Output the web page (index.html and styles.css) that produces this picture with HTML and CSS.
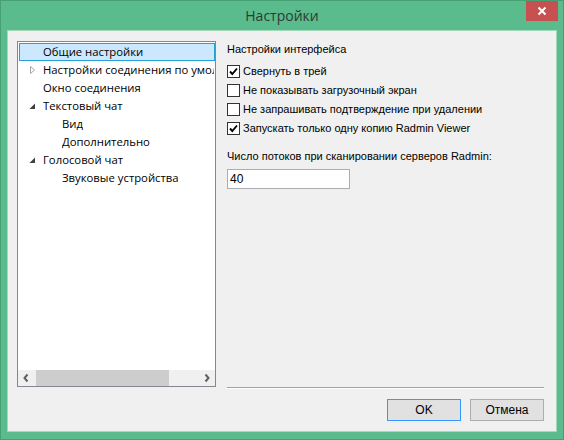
FILE: index.html
```html
<!DOCTYPE html>
<html lang="ru">
<head>
<meta charset="utf-8">
<title>Настройки</title>
<link rel="stylesheet" href="styles.css">
</head>
<body>
<div class="window">
  <div class="titlebar">
    <div class="tb-spacer"></div>
    <div class="title">Настройки</div>
    <div class="tb-right">
      <div class="close-btn">
        <svg width="10" height="10" viewBox="0 0 10 10"><path d="M1.5 1.5 L8.5 8.5 M8.5 1.5 L1.5 8.5" stroke="#fff" stroke-width="2" fill="none"/></svg>
      </div>
    </div>
  </div>
  <div class="client">
    <div class="main">
      <div class="tree">
        <div class="tree-items">
          <div class="node lvl0 selected"><span class="exp"></span><span class="label">Общие настройки</span></div>
          <div class="node lvl0"><span class="exp"><svg width="12" height="16" viewBox="0 0 12 16"><path d="M3.5 4.5 L7.5 8 L3.5 11.5 Z" fill="none" stroke="#a6a6a6" stroke-width="1"/></svg></span><span class="label">Настройки соединения по умолчанию</span></div>
          <div class="node lvl0"><span class="exp"></span><span class="label">Окно соединения</span></div>
          <div class="node lvl0"><span class="exp"><svg width="12" height="16" viewBox="0 0 12 16"><path d="M8 5.5 L8 11 L2.5 11 Z" fill="#404040"/></svg></span><span class="label">Текстовый чат</span></div>
          <div class="node lvl1"><span class="exp"></span><span class="label">Вид</span></div>
          <div class="node lvl1"><span class="exp"></span><span class="label">Дополнительно</span></div>
          <div class="node lvl0"><span class="exp"><svg width="12" height="16" viewBox="0 0 12 16"><path d="M8 5.5 L8 11 L2.5 11 Z" fill="#404040"/></svg></span><span class="label">Голосовой чат</span></div>
          <div class="node lvl1"><span class="exp"></span><span class="label">Звуковые устройства</span></div>
        </div>
        <div class="hscroll">
          <div class="sb-btn"><svg width="17" height="16" viewBox="0 0 17 16"><path d="M9.5 4.5 L6.5 8 L9.5 11.5" fill="none" stroke="#606060" stroke-width="2"/></svg></div>
          <div class="sb-thumb"></div>
          <div class="sb-track"></div>
          <div class="sb-btn"><svg width="17" height="16" viewBox="0 0 17 16"><path d="M7.5 4.5 L10.5 8 L7.5 11.5" fill="none" stroke="#606060" stroke-width="2"/></svg></div>
        </div>
      </div>
      <div class="panel">
        <div class="heading">Настройки интерфейса</div>
        <div class="checks">
          <div class="check-row"><span class="box"><svg width="11" height="11" viewBox="0 0 11 11"><path d="M2 5.5 L4.3 8 L9 2.5" fill="none" stroke="#000" stroke-width="1.9"/></svg></span><span class="check-text">Свернуть в трей</span></div>
          <div class="check-row"><span class="box"></span><span class="check-text">Не показывать загрузочный экран</span></div>
          <div class="check-row"><span class="box"></span><span class="check-text">Не запрашивать подтверждение при удалении</span></div>
          <div class="check-row"><span class="box"><svg width="11" height="11" viewBox="0 0 11 11"><path d="M2 5.5 L4.3 8 L9 2.5" fill="none" stroke="#000" stroke-width="1.9"/></svg></span><span class="check-text">Запускать только одну копию Radmin Viewer</span></div>
        </div>
        <div class="field-label">Число потоков при сканировании серверов Radmin:</div>
        <div class="textbox">40</div>
      </div>
    </div>
    <div class="footer">
      <div class="btn default">OK</div>
      <div class="btn">Отмена</div>
    </div>
  </div>
</div>
</body>
</html>
```

FILE: styles.css
```css
html, body {
  margin: 0;
  padding: 0;
  background: #5bbd8d;
}

.window {
  width: 564px;
  height: 440px;
  box-sizing: border-box;
  border: 1px solid #46a074;
  background: #5abc8c;
  display: flex;
  flex-direction: column;
}

.titlebar {
  height: 29px;
  display: grid;
  grid-template-columns: 1fr auto 1fr;
  align-items: start;
}

.title {
  font-family: "Open Sans", "Noto Sans", sans-serif;
  font-size: 14px;
  color: #2e3a33;
  line-height: 29px;
  height: 29px;
}

.tb-right {
  display: flex;
  justify-content: flex-end;
  padding-right: 5px;
}

.close-btn {
  width: 32px;
  height: 20px;
  background: #c75050;
  display: flex;
  align-items: center;
  justify-content: center;
}

.close-btn svg {
  display: block;
}

.client {
  margin: 0 6px 7px 6px;
  flex: 1;
  border: 1px solid #a3d8bc;
  background: #f0f0f0;
  padding: 10px 12px 0 9px;
  display: flex;
  flex-direction: column;
}

.main {
  display: flex;
  align-items: flex-start;
}

.tree {
  width: 199px;
  height: 346px;
  box-sizing: border-box;
  border: 1px solid #828790;
  background: #fff;
  display: flex;
  flex-direction: column;
  overflow: hidden;
}

.tree-items {
  flex: 1;
  padding-top: 1px;
  overflow: hidden;
}

.node {
  height: 18px;
  box-sizing: border-box;
  margin-left: 1px;
  border: 1px solid transparent;
  display: flex;
  align-items: center;
  white-space: nowrap;
  overflow: hidden;
  font-family: "Open Sans", "Noto Sans", sans-serif;
  font-size: 11.3px;
  line-height: 16px;
  color: #000;
}

.node .label {
  min-width: 0;
  overflow: hidden;
  text-overflow: clip;
}

.node.selected {
  background: #cce8ff;
  border-color: #26a0da;
}

.node.lvl0 { padding-left: 7px; }
.node.lvl1 { padding-left: 26px; }

.exp {
  width: 12px;
  height: 16px;
  flex: none;
  margin-right: 4px;
}

.exp svg { display: block; }

.hscroll {
  height: 16px;
  display: flex;
  background: #f0f0f0;
}

.sb-btn {
  width: 17px;
  height: 16px;
  flex: none;
}

.sb-btn svg { display: block; }

.sb-thumb {
  margin-left: 1px;
  width: 133px;
  background: #cdcdcd;
}

.sb-track { flex: 1; }

.panel {
  width: 317px;
  height: 347px;
  box-sizing: border-box;
  margin-left: 11px;
  border-bottom: 1px solid #a0a0a0;
  box-shadow: 0 1px 0 #ffffff;
  font-family: "Liberation Sans", Arial, sans-serif;
  font-size: 11px;
  line-height: 13px;
  color: #000;
  padding-top: 2px;
}

.heading {
  margin-bottom: 6px;
}

.check-row {
  height: 19px;
  display: flex;
  align-items: center;
}

.box {
  width: 13px;
  height: 13px;
  box-sizing: border-box;
  border: 1px solid #333;
  background: #fff;
  margin-right: 3px;
  flex: none;
}

.box svg { display: block; }

.check-text {
  white-space: nowrap;
}

.field-label {
  margin-top: 12px;
}

.textbox {
  margin-top: 6px;
  width: 123px;
  height: 20px;
  box-sizing: border-box;
  border: 1px solid #abadb3;
  background: #fff;
  font-size: 12px;
  line-height: 18px;
  padding-left: 2px;
}

.footer {
  margin-top: 11px;
  display: flex;
  justify-content: flex-end;
  gap: 9px;
}

.btn {
  width: 74px;
  height: 22px;
  box-sizing: border-box;
  border: 1px solid #adadad;
  background: #e1e1e1;
  font-family: "Liberation Sans", Arial, sans-serif;
  font-size: 12px;
  line-height: 20px;
  text-align: center;
  color: #000;
}

.btn.default {
  border-color: #3399ff;
}
```
